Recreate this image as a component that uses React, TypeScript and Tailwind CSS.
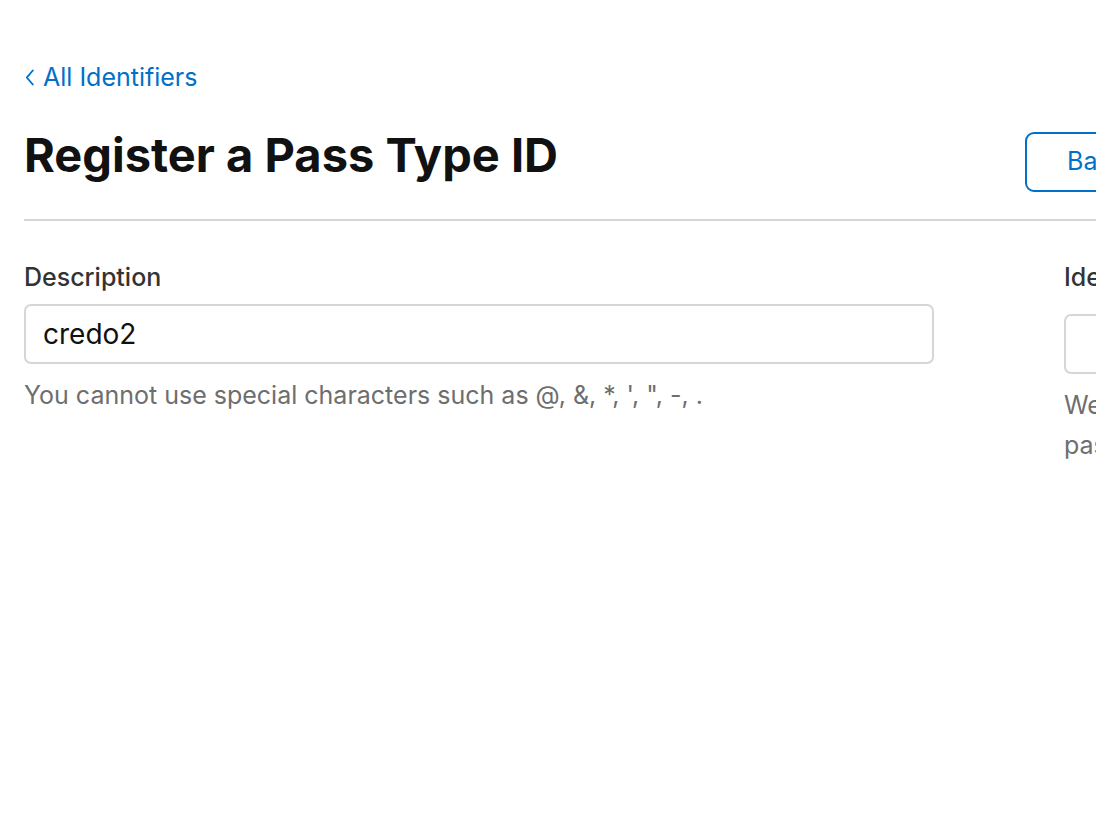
const font = { fontFamily: 'Inter, "Noto Sans", sans-serif' }

export default function App() {
  return (
    <div className="w-[1096px] h-[836px] overflow-hidden bg-white" style={font}>
      <div className="w-[2000px] pl-6 pt-[60px]">
        <a className="flex items-center gap-[9px] text-[25px] leading-[34px] text-[#0070c9]">
          <svg width="9" height="17" viewBox="0 0 9 17" fill="none" className="ml-[1px] mt-[1px]">
            <path d="M7.8 1.5 1.8 8.5l6 7" stroke="#0070c9" strokeWidth="1.9" strokeLinecap="round" strokeLinejoin="round" />
          </svg>
          All Identifiers
        </a>

        <div className="flex items-start mt-[25px] pb-[27px] border-b-2 border-[#d6d6d6]">
          <h1 className="text-[47px] font-bold leading-[72px] text-[#111]">Register a Pass Type ID</h1>
          <div className="ml-[467px] mt-[13px] flex gap-4">
            <button className="h-[60px] px-[40px] rounded-[9px] border-2 border-[#0070c9] text-[25px] text-[#0070c9]">Back</button>
            <button className="h-[60px] px-[40px] rounded-[9px] bg-[#0070c9] text-[25px] text-white">Continue</button>
          </div>
        </div>

        <div className="flex gap-[130px] mt-[36px]">
          <div className="w-[910px]">
            <label className="block text-[25px] font-medium leading-[40px] text-[#333]">Description</label>
            <input
              readOnly
              value="credo2"
              className="mt-[7px] w-full h-[60px] px-[17px] rounded-[7px] border-2 border-[#d6d6d6] text-[28px] text-[#111] outline-none"
            />
            <p className="mt-[11px] text-[25px] leading-[40px] text-[#6e6e6e]">
              You cannot use special characters such as @, &amp;, *, ', ", -, .
            </p>
          </div>
          <div className="w-[910px]">
            <label className="block text-[25px] font-medium leading-[40px] text-[#333]">Identifier</label>
            <input
              readOnly
              value=""
              className="mt-[17px] w-full h-[60px] px-[17px] rounded-[7px] border-2 border-[#d6d6d6] text-[28px] text-[#111] outline-none"
            />
            <p className="mt-[11px] text-[25px] leading-[40px] text-[#6e6e6e]">
              We recommend using a reverse-domain name style string beginning with pass (i.e., pass.com.domainname.appname). It cannot include asterisk (*).
            </p>
          </div>
        </div>
      </div>
    </div>
  )
}
